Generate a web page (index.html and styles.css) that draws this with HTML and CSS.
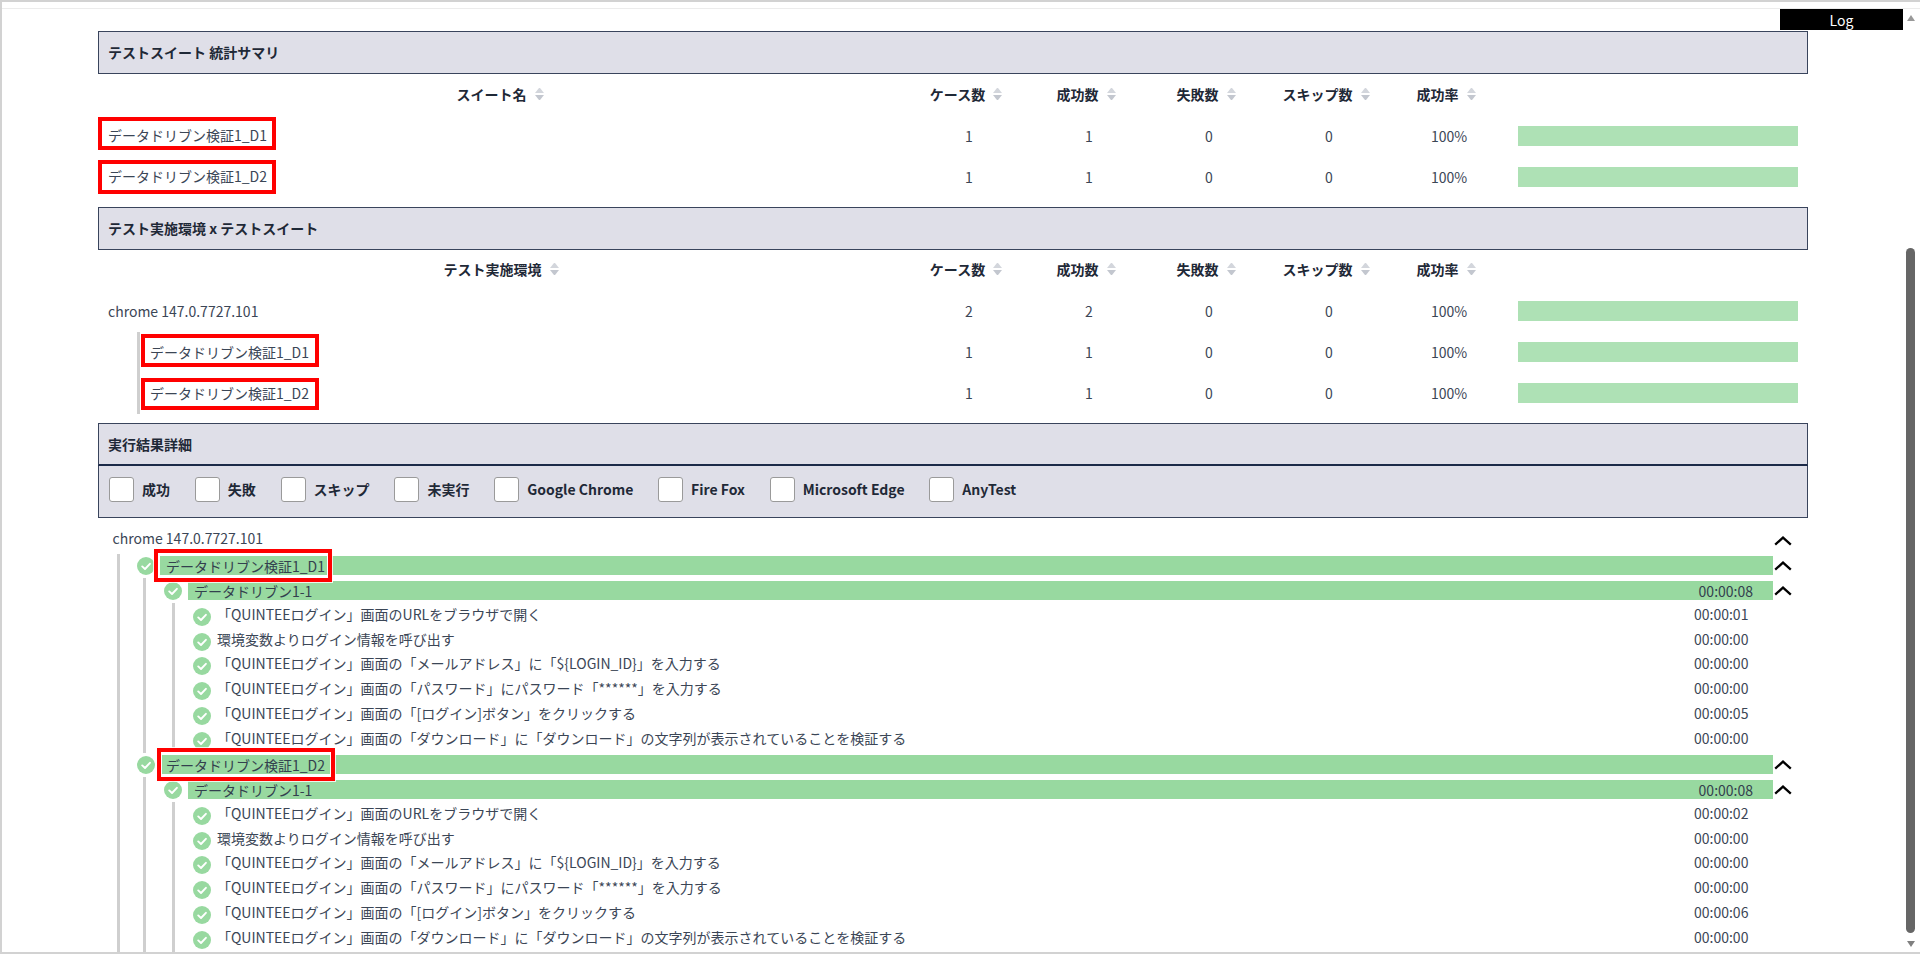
FILE: index.html
```html
<!DOCTYPE html>
<html lang="ja">
<head>
<meta charset="utf-8">
<title>テスト結果</title>
<link rel="stylesheet" href="styles.css">
</head>
<body>
<svg class="defs" aria-hidden="true">
  <symbol id="check" viewBox="0 0 18 18">
    <circle cx="9" cy="9" r="9" fill="#98d9a0"/>
    <path d="M5.2 9.4 8 12l4.9-5.2" fill="none" stroke="#fff" stroke-width="1.9" stroke-linecap="round" stroke-linejoin="round"/>
  </symbol>
  <symbol id="chevron" viewBox="0 0 18 10">
    <path d="M1.2 8.6 9 1.6l7.8 7" fill="none" stroke="#000" stroke-width="2.3"/>
  </symbol>
</svg>
<div class="frame">
  <div class="topline"></div>
  <div class="viewport">
    <main class="content">

      <section class="section">
        <h2 class="section-head">テストスイート 統計サマリ</h2>
        <div class="tr th">
          <div class="head-cell name-head">スイート名<i class="sort"></i></div>
          <div class="head-cell">ケース数<i class="sort"></i></div>
          <div class="head-cell">成功数<i class="sort"></i></div>
          <div class="head-cell">失敗数<i class="sort"></i></div>
          <div class="head-cell">スキップ数<i class="sort"></i></div>
          <div class="head-cell">成功率<i class="sort"></i></div>
          <div></div>
        </div>
        <div class="tr">
          <div class="name">データドリブン検証1_D1<span class="mark mark-s1"></span></div>
          <div class="num">1</div><div class="num">1</div><div class="num">0</div><div class="num">0</div><div class="num">100%</div>
          <div class="bar-cell"><div class="rate"></div></div>
        </div>
        <div class="tr">
          <div class="name">データドリブン検証1_D2<span class="mark mark-s2"></span></div>
          <div class="num">1</div><div class="num">1</div><div class="num">0</div><div class="num">0</div><div class="num">100%</div>
          <div class="bar-cell"><div class="rate"></div></div>
        </div>
      </section>

      <section class="section">
        <h2 class="section-head">テスト実施環境 x テストスイート</h2>
        <div class="tr th">
          <div class="head-cell">テスト実施環境<i class="sort"></i></div>
          <div class="head-cell">ケース数<i class="sort"></i></div>
          <div class="head-cell">成功数<i class="sort"></i></div>
          <div class="head-cell">失敗数<i class="sort"></i></div>
          <div class="head-cell">スキップ数<i class="sort"></i></div>
          <div class="head-cell">成功率<i class="sort"></i></div>
          <div></div>
        </div>
        <div class="tr">
          <div class="name">chrome 147.0.7727.101</div>
          <div class="num">2</div><div class="num">2</div><div class="num">0</div><div class="num">0</div><div class="num">100%</div>
          <div class="bar-cell"><div class="rate"></div></div>
        </div>
        <div class="tr">
          <div class="name"><div class="sub">データドリブン検証1_D1</div><span class="mark mark-e1"></span></div>
          <div class="num">1</div><div class="num">1</div><div class="num">0</div><div class="num">0</div><div class="num">100%</div>
          <div class="bar-cell"><div class="rate"></div></div>
        </div>
        <div class="tr">
          <div class="name"><div class="sub">データドリブン検証1_D2</div><span class="mark mark-e2"></span></div>
          <div class="num">1</div><div class="num">1</div><div class="num">0</div><div class="num">0</div><div class="num">100%</div>
          <div class="bar-cell"><div class="rate"></div></div>
        </div>
      </section>

      <section>
        <h2 class="section-head detail-head">実行結果詳細</h2>
        <div class="filters">
          <label class="filter"><span class="box"></span>成功</label>
          <label class="filter"><span class="box"></span>失敗</label>
          <label class="filter"><span class="box"></span>スキップ</label>
          <label class="filter"><span class="box"></span>未実行</label>
          <label class="filter"><span class="box"></span>Google Chrome</label>
          <label class="filter"><span class="box"></span>Fire Fox</label>
          <label class="filter"><span class="box"></span>Microsoft Edge</label>
          <label class="filter"><span class="box"></span>AnyTest</label>
        </div>

        <div class="tree">
          <div class="row env-row">
            <span class="env-name">chrome 147.0.7727.101</span>
            <svg class="chev"><use href="#chevron"/></svg>
          </div>
          <div class="level-1">

            <div class="row suite-row">
              <svg class="ok"><use href="#check"/></svg>
              <div class="bar">データドリブン検証1_D1</div>
              <svg class="chev"><use href="#chevron"/></svg>
              <span class="mark mark-t1"></span>
            </div>
            <div class="level-2">
              <div class="row case-row">
                <svg class="ok"><use href="#check"/></svg>
                <div class="bar">データドリブン1-1<span class="bar-time">00:00:08</span></div>
                <svg class="chev"><use href="#chevron"/></svg>
              </div>
              <div class="level-3">
                <div class="row step-row"><svg class="ok"><use href="#check"/></svg><span class="step-text">「QUINTEEログイン」画面のURLをブラウザで開く</span><span class="step-time">00:00:01</span></div>
                <div class="row step-row"><svg class="ok"><use href="#check"/></svg><span class="step-text">環境変数よりログイン情報を呼び出す</span><span class="step-time">00:00:00</span></div>
                <div class="row step-row"><svg class="ok"><use href="#check"/></svg><span class="step-text">「QUINTEEログイン」画面の「メールアドレス」に「${LOGIN_ID}」を入力する</span><span class="step-time">00:00:00</span></div>
                <div class="row step-row"><svg class="ok"><use href="#check"/></svg><span class="step-text">「QUINTEEログイン」画面の「パスワード」にパスワード「******」を入力する</span><span class="step-time">00:00:00</span></div>
                <div class="row step-row"><svg class="ok"><use href="#check"/></svg><span class="step-text">「QUINTEEログイン」画面の「[ログイン]ボタン」をクリックする</span><span class="step-time">00:00:05</span></div>
                <div class="row step-row"><svg class="ok"><use href="#check"/></svg><span class="step-text">「QUINTEEログイン」画面の「ダウンロード」に「ダウンロード」の文字列が表示されていることを検証する</span><span class="step-time">00:00:00</span></div>
              </div>
            </div>

            <div class="row suite-row">
              <svg class="ok"><use href="#check"/></svg>
              <div class="bar">データドリブン検証1_D2</div>
              <svg class="chev"><use href="#chevron"/></svg>
              <span class="mark mark-t2"></span>
            </div>
            <div class="level-2">
              <div class="row case-row">
                <svg class="ok"><use href="#check"/></svg>
                <div class="bar">データドリブン1-1<span class="bar-time">00:00:08</span></div>
                <svg class="chev"><use href="#chevron"/></svg>
              </div>
              <div class="level-3">
                <div class="row step-row"><svg class="ok"><use href="#check"/></svg><span class="step-text">「QUINTEEログイン」画面のURLをブラウザで開く</span><span class="step-time">00:00:02</span></div>
                <div class="row step-row"><svg class="ok"><use href="#check"/></svg><span class="step-text">環境変数よりログイン情報を呼び出す</span><span class="step-time">00:00:00</span></div>
                <div class="row step-row"><svg class="ok"><use href="#check"/></svg><span class="step-text">「QUINTEEログイン」画面の「メールアドレス」に「${LOGIN_ID}」を入力する</span><span class="step-time">00:00:00</span></div>
                <div class="row step-row"><svg class="ok"><use href="#check"/></svg><span class="step-text">「QUINTEEログイン」画面の「パスワード」にパスワード「******」を入力する</span><span class="step-time">00:00:00</span></div>
                <div class="row step-row"><svg class="ok"><use href="#check"/></svg><span class="step-text">「QUINTEEログイン」画面の「[ログイン]ボタン」をクリックする</span><span class="step-time">00:00:06</span></div>
                <div class="row step-row"><svg class="ok"><use href="#check"/></svg><span class="step-text">「QUINTEEログイン」画面の「ダウンロード」に「ダウンロード」の文字列が表示されていることを検証する</span><span class="step-time">00:00:00</span></div>
              </div>
            </div>

          </div>
        </div>
      </section>
    </main>
    <button class="log-btn" type="button">Log</button>
    <div class="scrollbar">
      <span class="arrow-up"></span>
      <span class="thumb"></span>
      <span class="arrow-down"></span>
    </div>
  </div>
</div>
</body>
</html>
```

FILE: styles.css
```css
* { box-sizing: border-box; }

html, body { margin: 0; height: 100%; overflow: hidden; }

body {
  background: #fff;
  color: #3b4656;
  font-family: "Noto Sans CJK JP", "Noto Sans", sans-serif;
  font-size: 14px;
  line-height: 20px;
}

.defs { position: absolute; width: 0; height: 0; }

.frame {
  height: 954px;
  display: flex;
  flex-direction: column;
  border-top: 2px solid #d2d2d2;
  border-bottom: 2px solid #d2d2d2;
  border-left: 2px solid #d2d2d2;
}

.topline { margin-top: 6px; height: 1px; flex: none; background: #ececec; }

.viewport { flex: 1; min-height: 0; display: flex; position: relative; }

.content {
  flex: 1;
  min-width: 0;
  overflow: hidden;
  padding: 22px 0 0 96px;
}

.log-btn {
  position: absolute;
  top: 0;
  right: 17px;
  width: 123px;
  height: 21px;
  padding: 0;
  border: 0;
  background: #000;
  color: #fff;
  font: inherit;
  line-height: 22px;
}

.scrollbar {
  flex: none;
  width: 15px;
  margin-right: 2px;
  display: flex;
  flex-direction: column;
  align-items: center;
}

.arrow-up {
  margin-top: 6px;
  border-left: 4.5px solid transparent;
  border-right: 4.5px solid transparent;
  border-bottom: 6px solid #999;
}

.thumb {
  width: 9px;
  height: 685px;
  margin-top: 227px;
  border-radius: 4.5px;
  background: #666;
}

.arrow-down {
  margin-top: 8px;
  border-left: 4.5px solid transparent;
  border-right: 4.5px solid transparent;
  border-top: 6px solid #808080;
}

.section { width: 1710px; margin-bottom: 9.5px; }

.section-head {
  width: 1710px;
  height: 43px;
  margin: 0;
  padding: 0 0 1px 9px;
  display: flex;
  align-items: center;
  background: #dfdfe8;
  border: 1px solid #39445c;
  color: #1f2937;
  font-size: 14px;
  font-weight: 700;
}

.detail-head { padding-bottom: 0; border-bottom: 2px solid #1c2a48; }

.tr {
  display: grid;
  grid-template-columns: 810px repeat(5, 120px) 300px;
  align-items: center;
  height: 41px;
}

.th { font-weight: 700; color: #1f2937; }

.head-cell {
  display: flex;
  align-items: center;
  justify-content: center;
  gap: 8px;
  padding: 0 4px 2px 0;
}

.name-head { padding-right: 6px; }

.sort {
  display: flex;
  flex-direction: column;
  gap: 2px;
  width: 9px;
}

.sort::before,
.sort::after {
  content: "";
  border-left: 4.5px solid transparent;
  border-right: 4.5px solid transparent;
}

.sort::before { border-bottom: 5px solid #d3d6dc; }
.sort::after { border-top: 5px solid #c3c7cf; }

.name {
  position: relative;
  height: 41px;
  padding: 0 0 1px 10px;
  display: flex;
  align-items: center;
}

.sub {
  height: 41px;
  margin: 0 0 -1px 29px;
  padding: 0 0 1px 10px;
  display: flex;
  align-items: center;
  border-left: 3px solid #cfcfcf;
}

.num { padding-left: 2px; text-align: center; }

.bar-cell { padding: 0 10px; }

.rate { height: 20px; background: #aee1b5; }

.mark {
  position: absolute;
  z-index: 2;
  border: 4px solid #f00;
  box-shadow: 0 0 0 1px rgba(255, 255, 255, .8), inset 0 0 0 1px #fff;
  pointer-events: none;
}

.mark-s1 { left: 0; top: 2px; width: 178px; height: 33px; }
.mark-s2 { left: 0; top: 4px; width: 178px; height: 34px; }
.mark-e1 { left: 43px; top: 2.5px; width: 178px; height: 33px; }
.mark-e2 { left: 43px; top: 5.5px; width: 178px; height: 32px; }
.mark-t1 { left: 34px; top: -5px; width: 178px; height: 33px; }
.mark-t2 { left: 37.5px; top: -4.5px; width: 178px; height: 33px; }

.filters {
  width: 1710px;
  height: 52px;
  padding: 0 0 5px 10px;
  display: flex;
  align-items: center;
  gap: 24.8px;
  background: #dfdfe8;
  border: solid #39445c;
  border-width: 0 1px 1px;
  color: #1f2937;
  font-weight: 700;
}

.filter { display: flex; align-items: center; gap: 8px; }

.box {
  width: 25px;
  height: 25px;
  background: #fff;
  border: 1px solid #9a9a9a;
  border-radius: 3px;
}

.tree { width: 1695px; padding-left: 14.6px; }

.row {
  position: relative;
  display: flex;
  align-items: center;
  height: 24.875px;
}

.env-row { height: 35.5px; align-items: flex-end; }

.env-name { flex: 1; height: 25px; line-height: 25px; margin-bottom: 3px; }

.env-row .chev { margin-bottom: 8px; }

.level-1 { margin-left: 4px; border-left: 3px solid #cfcfcf; }
.level-2 { margin-left: 23.4px; border-left: 3px solid #cfcfcf; }
.level-3 { margin-left: 26px; border-left: 3px solid #cfcfcf; }

.suite-row { padding-left: 17.4px; }
.case-row { padding-left: 18.5px; }
.step-row { padding-left: 18px; }

.ok { flex: none; width: 18px; height: 18px; margin-right: 5px; }

.case-row .ok { margin-right: 5.5px; }

.step-row .ok { margin-top: 2px; margin-right: 6px; }

.bar {
  flex: 1;
  height: 19px;
  padding: 0 20px 0 6px;
  display: flex;
  justify-content: space-between;
  background: #98d9a0;
  color: #33404e;
  line-height: 21px;
}

.chev { flex: none; width: 20px; height: 10px; padding: 0; margin-top: 1px; }

.step-text { flex: 1; margin-bottom: 4px; }

.step-time { width: 99px; margin-bottom: 4px; }
```
